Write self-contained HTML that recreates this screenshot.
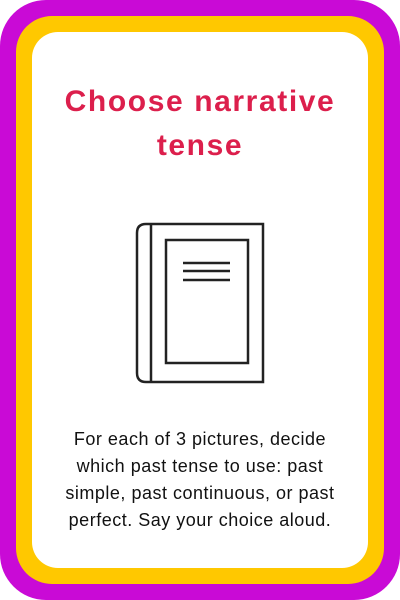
<!DOCTYPE html>
<html><head><meta charset="utf-8"><style>
html,body{margin:0;padding:0;background:#fff;width:400px;height:600px;overflow:hidden}
.outer{position:absolute;left:0;top:0;width:400px;height:600px;background:#c90ad6;border-radius:46px}
.mid{position:absolute;left:16px;top:16px;width:368px;height:568px;background:#ffc800;border-radius:36px}
.inner{position:absolute;left:32px;top:32px;width:336px;height:536px;background:#fff;border-radius:26px}
h1{position:absolute;left:0;top:80px;width:400px;margin:0;text-align:center;font:bold 30px/44px "Liberation Sans",sans-serif;color:#dc1f4c;letter-spacing:1.6px}
p{position:absolute;left:0;top:426px;width:400px;margin:0;text-align:center;font:18px/27px "Liberation Sans",sans-serif;color:#111;letter-spacing:0.5px}
svg{position:absolute;left:0;top:0}
</style></head><body>
<div class="outer"></div><div class="mid"></div><div class="inner"></div>
<h1>Choose narrative<br>tense</h1>
<svg width="400" height="600"><g fill="none" stroke="#222" stroke-width="2.5">
<path d="M146 224 H263 V382 H146 Q137 382 137 373 V233 Q137 224 146 224 Z"/>
<line x1="151" y1="224" x2="151" y2="382"/>
<rect x="166" y="240" width="82" height="123"/>
<line x1="183" y1="263" x2="230" y2="263"/><line x1="183" y1="271" x2="230" y2="271"/><line x1="183" y1="280" x2="230" y2="280"/>
</g></svg>
<p>For each of 3 pictures, decide<br>which past tense to use: past<br>simple, past continuous, or past<br>perfect. Say your choice aloud.</p>
</body></html>
